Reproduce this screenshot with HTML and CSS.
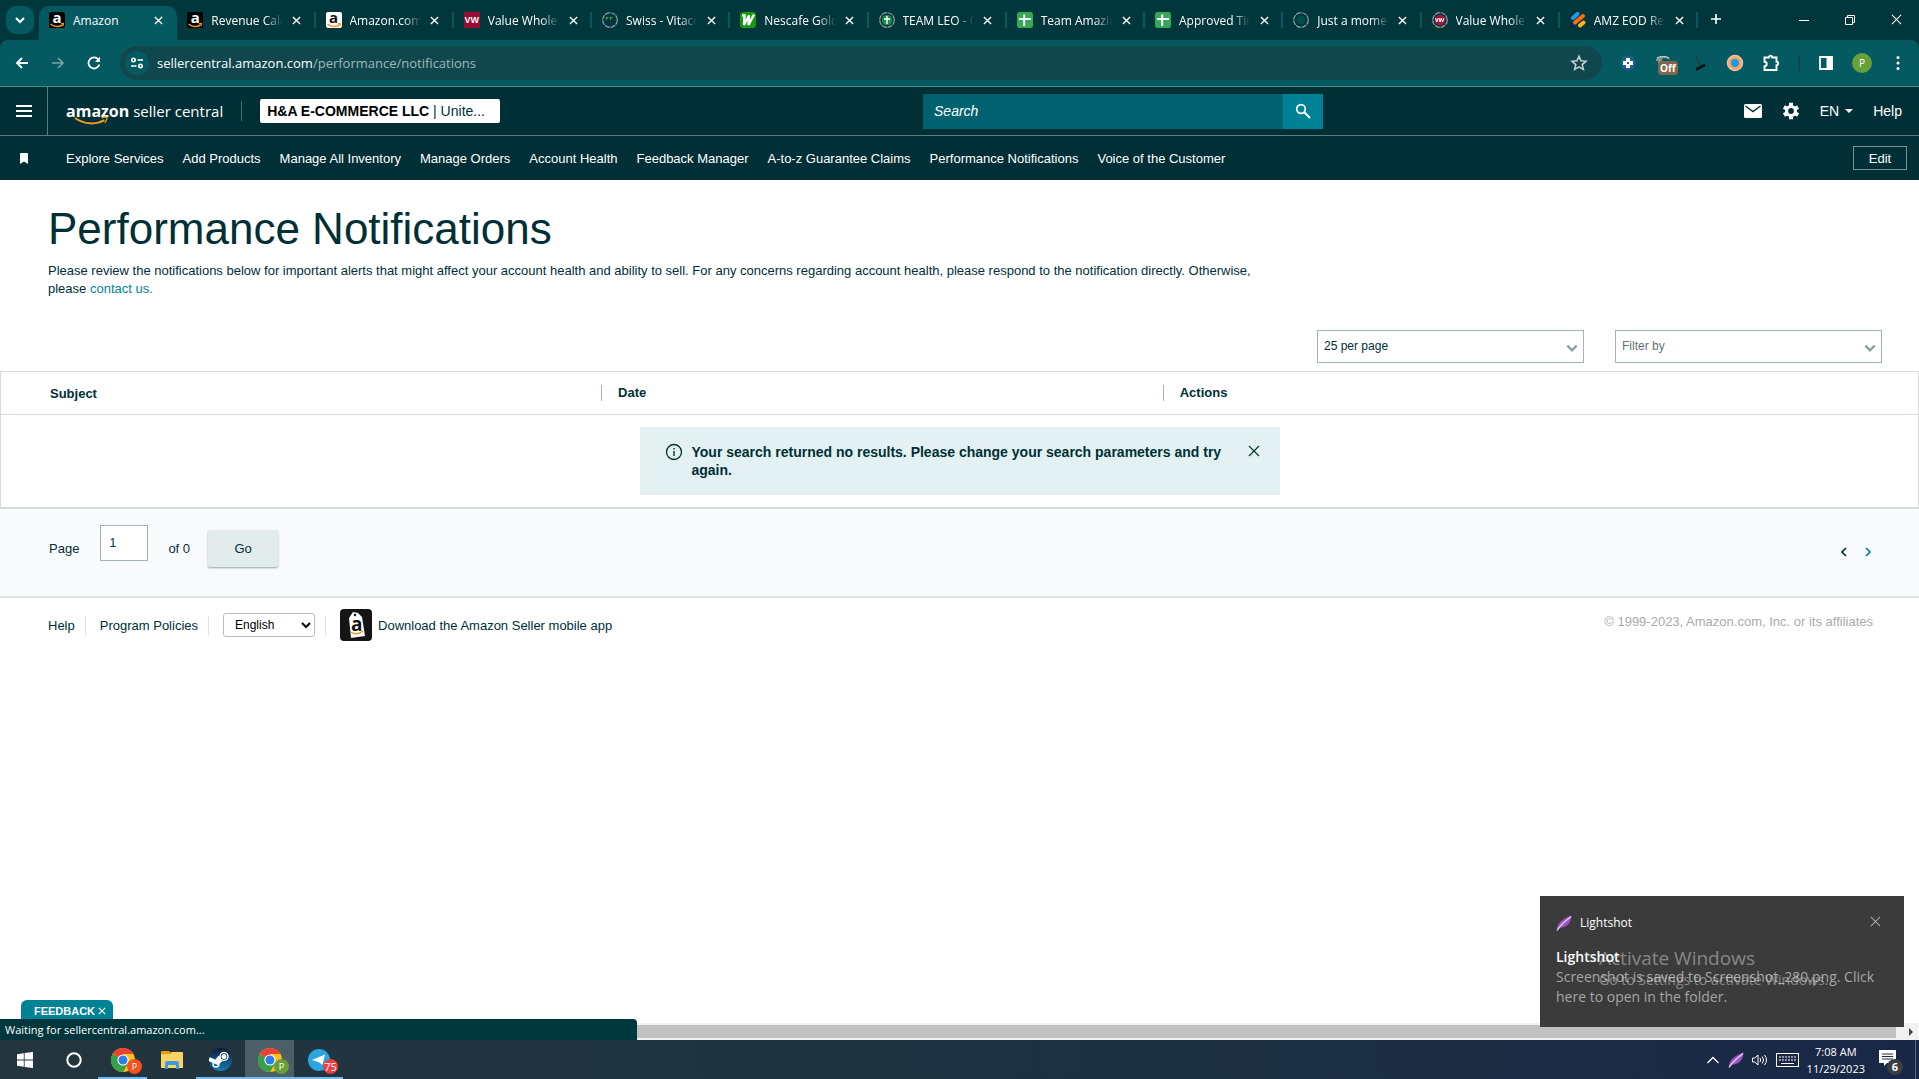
FILE: index.html
```html
<!DOCTYPE html>
<html lang="en">
<head>
    <meta charset="UTF-8">
    <meta name="viewport" content="width=device-width, initial-scale=1.0">
    <title>Performance Notifications</title>
    <link rel="stylesheet" href="styles.css">
</head>
<body>
    <!-- shared icons -->
    <svg class="defs" width="0" height="0" aria-hidden="true">
        <symbol id="i-x" viewBox="0 0 10 10"><path d="M1 1l8 8M9 1L1 9" fill="none" stroke="currentColor" stroke-width="1.5"/></symbol>
        <symbol id="i-thin-x" viewBox="0 0 12 12"><path d="M1 1l10 10M11 1L1 11" fill="none" stroke="currentColor" stroke-width="1.1"/></symbol>
        <symbol id="i-down" viewBox="0 0 12 12"><path d="M2 4l4 4 4-4" fill="none" stroke="currentColor" stroke-width="2"/></symbol>
        <symbol id="i-sheet" viewBox="0 0 16 16"><rect width="16" height="16" rx="1.500" fill="#34a853"/><path d="M6.200 2.500h2V6H14v2H8.200v6h-2V8H2V6h4.200z" fill="#fff"/></symbol>
        <symbol id="i-ring" viewBox="0 0 16 16"><circle cx="8" cy="8" r="7.300" fill="none" stroke="#8fa3a6" stroke-width="1.200" stroke-dasharray="5 .8"/></symbol>
        <symbol id="i-smile" viewBox="0 0 16 16"><path d="M1.500 12c4 3.300 9 3.200 12 .8" fill="none" stroke="#f7981d" stroke-width="1.500"/><path d="M11.800 11.800l2.700-.3-.6 2.700" fill="none" stroke="#f7981d" stroke-width="1.200"/></symbol>
        <symbol id="i-feather" viewBox="0 0 16 16"><path d="M1 15.500C0 9 7 3 15.500.5 15 8 11 12 5 12.500z" fill="#9b55bd"/><path d="M1 15.500C4 10 8 7 15 1.500" fill="none" stroke="#e6cdf2" stroke-width="1.300"/></symbol>
        <symbol id="i-chrome" viewBox="0 0 24 24"><circle cx="12" cy="12" r="12" fill="#fbc116"/><path d="M12 12L1.600 6A12 12 0 0 0 12 24l5.200-9z" fill="#34a047"/><path d="M12 12L1.600 6A12 12 0 0 1 22.400 6H12z" fill="#ea4335"/><circle cx="12" cy="12" r="5.600" fill="#fff"/><circle cx="12" cy="12" r="4.500" fill="#2f7de9"/></symbol>
    </svg>

    <header class="browser">
        <div class="tab-strip">
            <button class="tab-search" aria-label="Search tabs"><svg width="12" height="12"><use href="#i-down"/></svg></button>
            <div class="tabs">
                <div class="tab active">
                    <span class="favicon amazon-dark">a<svg width="16" height="16"><use href="#i-smile"/></svg></span>
                    <span class="tab-title">Amazon</span>
                    <button class="tab-close" aria-label="Close"><svg width="9" height="9"><use href="#i-x"/></svg></button>
                </div>
                <div class="tab">
                    <span class="favicon amazon-dark">a<svg width="16" height="16"><use href="#i-smile"/></svg></span>
                    <span class="tab-title">Revenue Calc</span>
                    <button class="tab-close" aria-label="Close"><svg width="9" height="9"><use href="#i-x"/></svg></button>
                </div>
                <div class="tab">
                    <span class="favicon amazon-light">a<svg width="16" height="16"><use href="#i-smile"/></svg></span>
                    <span class="tab-title">Amazon.com</span>
                    <button class="tab-close" aria-label="Close"><svg width="9" height="9"><use href="#i-x"/></svg></button>
                </div>
                <div class="tab">
                    <span class="favicon vw">VW</span>
                    <span class="tab-title">Value Wholes</span>
                    <button class="tab-close" aria-label="Close"><svg width="9" height="9"><use href="#i-x"/></svg></button>
                </div>
                <div class="tab">
                    <svg class="favicon" viewBox="0 0 16 16"><use href="#i-ring"/><path d="M4.500 8V5.500h2M8.500 8V5.500h1.500M10 5v1" fill="none" stroke="#5d9a3c" stroke-width="1.200"/></svg>
                    <span class="tab-title">Swiss - Vitaco</span>
                    <button class="tab-close" aria-label="Close"><svg width="9" height="9"><use href="#i-x"/></svg></button>
                </div>
                <div class="tab">
                    <svg class="favicon" viewBox="0 0 16 16"><rect width="16" height="16" rx="3" fill="#159a0c"/><path d="M2 3.500h2.500L4 13 9 3.500 8.500 13 14 2.500" fill="none" stroke="#fff" stroke-width="2.400"/></svg>
                    <span class="tab-title">Nescafe Gold</span>
                    <button class="tab-close" aria-label="Close"><svg width="9" height="9"><use href="#i-x"/></svg></button>
                </div>
                <div class="tab">
                    <svg class="favicon" viewBox="0 0 16 16"><use href="#i-ring"/><circle cx="8" cy="8" r="5.200" fill="#1e8a4c"/><path d="M8 4v8M5 7h6" stroke="#fff" stroke-width="1.400"/></svg>
                    <span class="tab-title">TEAM LEO - G</span>
                    <button class="tab-close" aria-label="Close"><svg width="9" height="9"><use href="#i-x"/></svg></button>
                </div>
                <div class="tab">
                    <svg class="favicon"><use href="#i-sheet"/></svg>
                    <span class="tab-title">Team Amazin</span>
                    <button class="tab-close" aria-label="Close"><svg width="9" height="9"><use href="#i-x"/></svg></button>
                </div>
                <div class="tab">
                    <svg class="favicon"><use href="#i-sheet"/></svg>
                    <span class="tab-title">Approved Tim</span>
                    <button class="tab-close" aria-label="Close"><svg width="9" height="9"><use href="#i-x"/></svg></button>
                </div>
                <div class="tab">
                    <svg class="favicon" viewBox="0 0 16 16"><use href="#i-ring"/><circle cx="8" cy="8" r="4.500" fill="#04494b"/></svg>
                    <span class="tab-title">Just a mome</span>
                    <button class="tab-close" aria-label="Close"><svg width="9" height="9"><use href="#i-x"/></svg></button>
                </div>
                <div class="tab">
                    <svg class="favicon" viewBox="0 0 16 16"><use href="#i-ring"/><circle cx="8" cy="8" r="5.500" fill="#a3123a"/><path d="M3.500 6l1.300 4L6.200 6M7 6l1 4 1.300-4 1.200 4L12 6" fill="none" stroke="#fff" stroke-width="1"/></svg>
                    <span class="tab-title">Value Whole</span>
                    <button class="tab-close" aria-label="Close"><svg width="9" height="9"><use href="#i-x"/></svg></button>
                </div>
                <div class="tab">
                    <svg class="favicon" viewBox="0 0 16 16" fill="none" stroke-width="4" stroke-linecap="round"><path d="M3 6l4.500-4" stroke="#1e9bf0"/><path d="M5 10.500L13 4" stroke="#ff6a13"/><path d="M10 13.500l3.500-3" stroke="#fdb515"/><path d="M1 12v4h4z" fill="#0c1f4a"/></svg>
                    <span class="tab-title">AMZ EOD Re</span>
                    <button class="tab-close" aria-label="Close"><svg width="9" height="9"><use href="#i-x"/></svg></button>
                </div>
            </div>
            <button class="new-tab" aria-label="New tab"><svg width="12" height="12" viewBox="0 0 12 12"><path d="M6 1v10M1 6h10" stroke="currentColor" stroke-width="1.600"/></svg></button>
            <div class="window-controls">
                <button aria-label="Minimize"><svg width="10" height="10" viewBox="0 0 10 10"><path d="M0 5.500h10" stroke="currentColor"/></svg></button>
                <button aria-label="Restore"><svg width="10" height="10" viewBox="0 0 10 10"><path d="M.5 2.500h7v7h-7zM2.500 2.500v-2h7v7h-2" fill="none" stroke="currentColor"/></svg></button>
                <button aria-label="Close window"><svg width="11" height="11"><use href="#i-thin-x"/></svg></button>
            </div>
        </div>

        <div class="toolbar">
            <button class="tool" aria-label="Back"><svg width="14" height="14" viewBox="0 0 14 14"><path d="M13 7H2M7 2L2 7l5 5" fill="none" stroke="currentColor" stroke-width="1.800"/></svg></button>
            <button class="tool dim" aria-label="Forward"><svg width="14" height="14" viewBox="0 0 14 14"><path d="M1 7h11M7 2l5 5-5 5" fill="none" stroke="currentColor" stroke-width="1.600"/></svg></button>
            <button class="tool" aria-label="Reload"><svg width="14" height="14" viewBox="0 0 14 14"><path d="M12.300 8.500A5.500 5.500 0 1 1 11.300 3.500L12.500 5" fill="none" stroke="currentColor" stroke-width="1.800"/><path d="M13 .8V6H8z" fill="currentColor"/></svg></button>
            <div class="address-bar">
                <span class="site-info"><svg width="14" height="14" viewBox="0 0 14 14" fill="none" stroke="currentColor" stroke-width="1.600"><circle cx="3.500" cy="4" r="1.700"/><path d="M7.500 4H13M1 10h5.500"/><circle cx="10.500" cy="10" r="1.700"/></svg></span>
                <span class="url">sellercentral.amazon.com<span>/performance/notifications</span></span>
                <button class="star" aria-label="Bookmark this tab"><svg width="18" height="18" viewBox="0 0 18 18"><path d="M9 2.200l2 4.600 5 .5-3.800 3.300 1.200 4.900L9 12.900l-4.400 2.600 1.200-4.900L2 7.300l5-.5z" fill="none" stroke="currentColor" stroke-width="1.500"/></svg></button>
            </div>
            <div class="extensions">
                <svg width="16" height="16" viewBox="0 0 16 16"><circle cx="8" cy="8" r="7.500" fill="#1d6090"/><path d="M6 3h4v3h3v4h-3v3H6v-3H3V6h3z" fill="#fff"/><path d="M7 7h2v2H7z" fill="#1d6090"/></svg>
                <span class="badge-ext"><svg width="20" height="18" viewBox="0 0 20 18"><path d="M2 5c3-3 12-3 14 0v1c-3-2-7-2-8-1v8H4V7L2 7z" fill="#8b9091"/><path d="M3 4c3-2 10-2 12 0" fill="none" stroke="#dfe3e3"/></svg><b>Off</b></span>
                <svg width="16" height="18" viewBox="0 0 16 18"><path d="M3 1l6 12" stroke="#23393b" stroke-width="1.300"/><path d="M4 15.500l9-4.500" stroke="#0b1112" stroke-width="2.600"/></svg>
                <svg width="18" height="18" viewBox="0 0 18 18"><circle cx="9" cy="9" r="7.500" fill="#f7a46a" stroke="#f4c29b" stroke-width="1.500"/><circle cx="9" cy="9" r="4" fill="#1d9be8"/></svg>
                <svg width="18" height="18" viewBox="0 0 18 18"><path d="M2.500 3.500h4.300a1.700 1.700 0 0 1 3.400 0h4.300v4.300a1.700 1.700 0 0 1 0 3.400v4.800h-12v-3.800a2.200 2.200 0 0 0 0-4.400z" fill="none" stroke="#fff" stroke-width="1.900"/></svg>
                <i class="tool-divider"></i>
                <svg width="16" height="16" viewBox="0 0 16 16"><path d="M2 2h12v12H2z" fill="none" stroke="#fff" stroke-width="1.800"/><path d="M8.500 2H14v12H8.500z" fill="#fff"/></svg>
                <span class="profile">P</span>
                <svg width="16" height="16" viewBox="0 0 16 16" fill="#fff"><circle cx="8" cy="2.500" r="1.500"/><circle cx="8" cy="8" r="1.500"/><circle cx="8" cy="13.500" r="1.500"/></svg>
            </div>
        </div>
    </header>

    <div class="page">
        <div class="seller-bar">
            <button class="menu-btn" aria-label="Menu"><svg width="16" height="12" viewBox="0 0 16 12"><path d="M0 1h16M0 6h16M0 11h16" stroke="currentColor" stroke-width="1.800"/></svg></button>
            <a class="logo" href="#"><b>amazon</b> seller central
                <svg class="logo-smile" width="36" height="9" viewBox="0 0 36 9"><path d="M1 2c9 6.500 21 7 29.500 2.200" fill="none" stroke="#f7981d" stroke-width="2"/><path d="M27.500 1.800c4-1.300 6-1 5.300 1-.3 1.600-1 2.800-2 4" fill="none" stroke="#f7981d" stroke-width="1.300"/></svg>
            </a>
            <button class="account"><b>H&amp;A E-COMMERCE LLC</b> | Unite...</button>
            <form class="search">
                <input type="text" placeholder="Search" aria-label="Search">
                <button type="button" aria-label="Search"><svg width="16" height="16" viewBox="0 0 16 16"><circle cx="6" cy="6" r="4.300" fill="none" stroke="currentColor" stroke-width="1.700"/><path d="M9.300 9.300L15 15" stroke="currentColor" stroke-width="2"/></svg></button>
            </form>
            <div class="header-tools">
                <a href="#" aria-label="Messages"><svg width="18" height="14" viewBox="0 0 18 14"><rect width="18" height="14" rx="1.500" fill="#fff"/><path d="M1.500 2L9 7.500 16.500 2" fill="none" stroke="#002f36" stroke-width="1.500"/></svg></a>
                <a href="#" aria-label="Settings"><svg width="18" height="18" viewBox="0 0 18 18"><path d="M9 .8v16.400M1.900 4.900l14.200 8.200M16.100 4.900L1.900 13.100" stroke="#fff" stroke-width="4"/><circle cx="9" cy="9" r="6" fill="#fff"/><circle cx="9" cy="9" r="2.900" fill="#002f36"/></svg></a>
                <a class="lang" href="#">EN <svg width="8" height="4" viewBox="0 0 8 4"><path d="M0 0h8L4 4z" fill="#fff"/></svg></a>
                <a href="#">Help</a>
            </div>
        </div>

        <nav class="favorites">
            <svg class="bookmark" width="8" height="11" viewBox="0 0 8 11"><path d="M0 1a1 1 0 0 1 1-1h6a1 1 0 0 1 1 1v10L4 8.500 0 11z" fill="#fff"/></svg>
            <a href="#">Explore Services</a>
            <a href="#">Add Products</a>
            <a href="#">Manage All Inventory</a>
            <a href="#">Manage Orders</a>
            <a href="#">Account Health</a>
            <a href="#">Feedback Manager</a>
            <a href="#">A-to-z Guarantee Claims</a>
            <a href="#">Performance Notifications</a>
            <a href="#">Voice of the Customer</a>
            <button class="edit">Edit</button>
        </nav>

        <main>
            <section class="intro">
                <h1>Performance Notifications</h1>
                <p>Please review the notifications below for important alerts that might affect your account health and ability to sell. For any concerns regarding account health, please respond to the notification directly. Otherwise, please <a href="#">contact us.</a></p>
            </section>

            <div class="filters">
                <div class="dropdown">
                    <select aria-label="Results per page"><option>25 per page</option></select>
                    <svg width="14" height="14" viewBox="0 0 12 12"><use href="#i-down"/></svg>
                </div>
                <div class="dropdown muted">
                    <select aria-label="Filter by"><option>Filter by</option></select>
                    <svg width="14" height="14" viewBox="0 0 12 12"><use href="#i-down"/></svg>
                </div>
            </div>

            <table class="notifications">
                <thead>
                    <tr>
                        <th class="subject">Subject</th>
                        <th class="date"><span>Date</span></th>
                        <th><span>Actions</span></th>
                    </tr>
                </thead>
                <tbody>
                    <tr>
                        <td colspan="3">
                            <div class="alert">
                                <svg width="18" height="18" viewBox="0 0 18 18"><circle cx="9" cy="9" r="7.500" fill="none" stroke="currentColor" stroke-width="1.300"/><path d="M9 8v5M9 5v1.500" stroke="currentColor" stroke-width="1.400"/></svg>
                                <p>Your search returned no results. Please change your search parameters and try again.</p>
                                <button aria-label="Dismiss"><svg width="12" height="12"><use href="#i-thin-x"/></svg></button>
                            </div>
                        </td>
                    </tr>
                </tbody>
            </table>

            <div class="pagination">
                <label for="page">Page</label>
                <input type="text" id="page" value="1">
                <span>of 0</span>
                <button class="go">Go</button>
                <div class="arrows">
                    <button aria-label="Previous"><svg width="6" height="10" viewBox="0 0 6 10"><path d="M5 1L1 5l4 4" fill="none" stroke="currentColor" stroke-width="1.700"/></svg></button>
                    <button class="next" aria-label="Next"><svg width="6" height="10" viewBox="0 0 6 10"><path d="M1 1l4 4-4 4" fill="none" stroke="currentColor" stroke-width="1.700"/></svg></button>
                </div>
            </div>

            <footer>
                <a href="#">Help</a>
                <i></i>
                <a href="#">Program Policies</a>
                <i></i>
                <select class="language" aria-label="Language"><option>English</option></select>
                <i></i>
                <a class="app" href="#">
                    <span class="app-icon"><svg width="32" height="32" viewBox="0 0 32 32"><path d="M9 9l4-6 5 1 4 4 3 19-14 2z" fill="#fff"/><circle cx="15" cy="6" r="1.200" fill="#111"/><path d="M11 23c4 3 8 2 12-1" fill="none" stroke="#f7981d" stroke-width="1.500"/></svg><b>a</b></span>
                    Download the Amazon Seller mobile app
                </a>
                <span class="copyright">© 1999-2023, Amazon.com, Inc. or its affiliates</span>
            </footer>
        </main>

        <div class="page-bottom">
            <button class="feedback">FEEDBACK <svg width="8" height="8"><use href="#i-x"/></svg></button>
            <div class="status-row">
                <div class="status">Waiting for sellercentral.amazon.com...</div>
                <div class="scrollbar"><i></i><svg width="16" height="16" viewBox="0 0 16 16"><path d="M6 4l4 4-4 4z" fill="#444"/></svg></div>
            </div>
        </div>

        <aside class="toast">
            <div class="toast-head">
                <svg width="16" height="16"><use href="#i-feather"/></svg>
                <span>Lightshot</span>
                <button aria-label="Close"><svg width="11" height="11"><use href="#i-thin-x"/></svg></button>
            </div>
            <strong>Lightshot</strong>
            <p>Screenshot is saved to Screenshot_280.png. Click here to open in the folder.</p>
            <div class="watermark">
                <div>Activate Windows</div>
                <small>Go to Settings to activate Windows.</small>
            </div>
        </aside>
    </div>

    <div class="taskbar">
        <button aria-label="Start"><svg width="16" height="16" viewBox="0 0 16 16" fill="#fff"><path d="M0 2.200l6.800-1v6.400H0zM7.600 1.100L16 0v7.600H7.600zM0 8.400h6.800v6.400l-6.800-1zM7.600 8.400H16V16l-8.400-1.100z"/></svg></button>
        <button aria-label="Cortana"><svg width="16" height="16" viewBox="0 0 16 16"><circle cx="8" cy="8" r="6.700" fill="none" stroke="#fff" stroke-width="2"/></svg></button>
        <button class="open" aria-label="Chrome"><svg width="24" height="24"><use href="#i-chrome"/></svg><b class="dot orange">P</b></button>
        <button aria-label="File Explorer"><svg width="22" height="18" viewBox="0 0 22 18"><path d="M0 1a1 1 0 0 1 1-1h7l2 2H0z" fill="#e5a100"/><path d="M0 3h9l2-2h10a1 1 0 0 1 1 1v15H0z" fill="#fcd462"/><path d="M0 3h9l2-2H0z" fill="#e5a100"/><path d="M4 18v-6a2 2 0 0 1 2-2h10a2 2 0 0 1 2 2v6h-3v-4H7v4z" fill="#3c9be6"/></svg></button>
        <button class="open" aria-label="Steam"><svg width="23" height="23" viewBox="0 0 23 23"><defs><linearGradient id="steam" x2="0" y2="1"><stop offset="0" stop-color="#111a3c"/><stop offset="1" stop-color="#127bb4"/></linearGradient></defs><circle cx="11.500" cy="11.500" r="11.500" fill="url(#steam)"/><path d="M0 11l7 3 4-5" fill="none" stroke="#fff" stroke-width="4"/><circle cx="15" cy="8.500" r="4" fill="#14284f" stroke="#fff" stroke-width="1.500"/><circle cx="15" cy="8.500" r="2.500" fill="#fff"/><path d="M7.500 16l5-4" stroke="#fff" stroke-width="3"/><circle cx="7" cy="16" r="3" fill="none" stroke="#fff" stroke-width="1.400"/></svg></button>
        <button class="open current" aria-label="Chrome"><svg width="24" height="24"><use href="#i-chrome"/></svg><b class="dot green">P</b></button>
        <button class="open" aria-label="Telegram"><svg width="22" height="22" viewBox="0 0 22 22"><circle cx="11" cy="11" r="11" fill="#2ca5e0"/><path d="M4 11l13-5.500L14.500 16l-4-3z" fill="#fff"/></svg><b class="dot red">75</b></button>
        <div class="tray">
            <svg width="14" height="14" viewBox="0 0 14 14"><path d="M1.500 10L7 4.500l5.500 5.500" fill="none" stroke="#fff" stroke-width="1.300"/></svg>
            <svg width="16" height="16"><use href="#i-feather"/></svg>
            <svg width="16" height="14" viewBox="0 0 16 14" fill="none" stroke="#fff"><path d="M.6 5v4h2.200L6 12V2L2.800 5z"/><path d="M8 5q1.500 2 0 4M10.200 3.500q3 3.500 0 7M12.500 2q4 5 0 10"/></svg>
            <svg width="23" height="14" viewBox="0 0 23 14" fill="none" stroke="#fff"><rect x=".5" y=".5" width="22" height="13"/><path d="M3 4h17M3 7h17" stroke-dasharray="2 1"/><path d="M5 10.500h13"/></svg>
            <div class="clock">7:08 AM<br>11/29/2023</div>
            <span class="action-center"><svg width="17" height="17" viewBox="0 0 17 17"><path d="M0 0h17v13H8l-3 3v-3H0z" fill="#fff"/><path d="M3 4h11M3 6.500h11M3 9h11" stroke="#1a2947"/></svg><b>6</b></span>
        </div>
    </div>
</body>
</html>
```
FILE: styles.css
```css
* {
    box-sizing: border-box;
}

body {
    margin: 0;
    height: 100vh;
    display: flex;
    flex-direction: column;
    overflow: hidden;
    font-family: "Liberation Sans", Arial, sans-serif;
    font-size: 13px;
    color: #002f36;
    background-color: #fff;
}

button {
    font: inherit;
    color: inherit;
    background: none;
    border: none;
    padding: 0;
    cursor: pointer;
}

a {
    color: inherit;
    text-decoration: none;
}

.defs {
    position: absolute;
}

/* browser window */
.browser,
.toast,
.taskbar,
.status {
    font-family: "Open Sans", sans-serif;
}

.browser {
    background-color: #00373c;
    color: #fff;
}

.tab-strip {
    display: flex;
    height: 40px;
    padding-left: 6px;
}

.tab-search {
    width: 28px;
    height: 28px;
    margin: 6px 5px 0 0;
    border-radius: 10px;
    background-color: #045a60;
    display: grid;
    place-items: center;
}

.tabs {
    flex: 1;
    display: flex;
    min-width: 0;
}

.tab {
    flex: 1 1 0;
    min-width: 0;
    display: flex;
    align-items: center;
    gap: 8px;
    padding: 0 11px 0 10px;
    position: relative;
}

.tab::after {
    content: "";
    position: absolute;
    right: 0;
    top: 12px;
    width: 2px;
    height: 16px;
    background-color: #045a60;
}

.tab.active {
    margin-top: 6px;
    padding-bottom: 6px;
    border-radius: 10px 10px 0 0;
    background-color: #045a60;
}

.tab.active::after {
    display: none;
}

.favicon {
    flex: none;
    width: 16px;
    height: 16px;
    border-radius: 2px;
    text-align: center;
    position: relative;
}

.favicon svg {
    position: absolute;
    left: 0;
    top: 0;
}

.amazon-dark,
.amazon-light {
    font: bold 15px/11px "Open Sans", sans-serif;
}

.amazon-dark {
    background-color: #000;
}

.amazon-light {
    background-color: #fff;
    color: #111;
}

.vw {
    background-color: #9b0c33;
    font: bold 9px/16px "Liberation Sans", Arial, sans-serif;
}

.tab-title {
    flex: 1;
    margin-right: -2px;
    overflow: hidden;
    white-space: nowrap;
    font-size: 12px;
    -webkit-mask-image: linear-gradient(to right, #000 75%, transparent);
    mask-image: linear-gradient(to right, #000 75%, transparent);
}

.tab.active .tab-title {
    -webkit-mask-image: none;
    mask-image: none;
}

.tab-close {
    width: 16px;
    height: 16px;
    display: grid;
    place-items: center;
}

.new-tab {
    width: 28px;
    margin: 0 51px 0 4px;
}

.window-controls {
    display: flex;
}

.window-controls button {
    width: 46px;
}

.toolbar {
    display: flex;
    align-items: center;
    gap: 8px;
    height: 47px;
    padding: 0 13px 0 8px;
    border-radius: 8px 8px 0 0;
    border-bottom: 1px solid #4d8a8e;
    background-color: #045a60;
}

.tool {
    width: 28px;
    height: 28px;
    display: grid;
    place-items: center;
}

.dim {
    opacity: 0.45;
}

.address-bar {
    flex: 1;
    display: flex;
    align-items: center;
    height: 34px;
    margin-left: 4px;
    padding: 0 14px 0 5px;
    border-radius: 17px;
    background-color: #10474d;
}

.site-info {
    width: 24px;
    height: 24px;
    margin-right: 8px;
    border-radius: 12px;
    background-color: #045a60;
    display: grid;
    place-items: center;
}

.url {
    flex: 1;
    font-size: 13px;
}

.url span {
    color: #9fb8ba;
}

.star {
    height: 18px;
    color: #c8d4d5;
}

.extensions {
    display: flex;
    align-items: center;
    gap: 18px;
    margin-left: 10px;
}

.badge-ext {
    position: relative;
    width: 20px;
    height: 18px;
}

.badge-ext b {
    position: absolute;
    left: 4px;
    top: 7px;
    padding: 0 2px;
    border-radius: 4px;
    background-color: #80664a;
    font-size: 10px;
    line-height: 14px;
}

.tool-divider {
    width: 2px;
    height: 16px;
    background-color: #10474d;
}

.profile {
    width: 20px;
    height: 20px;
    border-radius: 50%;
    background-color: #689f38;
    font-size: 10px;
    line-height: 20px;
    text-align: center;
}

/* seller central header */
.page {
    flex: 1;
    display: flex;
    flex-direction: column;
    position: relative;
}

.seller-bar {
    display: flex;
    align-items: center;
    height: 49px;
    background-color: #002f36;
    border-bottom: 1px solid #5f7b7f;
    color: #fff;
    position: relative;
}

.menu-btn {
    width: 48px;
    height: 48px;
    border-right: 1px solid #5f7b7f;
    display: grid;
    place-items: center;
}

.logo {
    margin-left: 18px;
    padding-right: 18px;
    border-right: 1px solid #4d6b70;
    font-family: "Open Sans", sans-serif;
    font-size: 15px;
    line-height: 20px;
    position: relative;
}

.logo b {
    font-size: 16px;
}

.logo-smile {
    position: absolute;
    left: 8px;
    bottom: -4px;
}

.account {
    width: 240px;
    height: 24px;
    margin-left: 18px;
    padding: 0 7px;
    border-radius: 2px;
    background-color: #fff;
    color: #002f36;
    font-size: 14px;
    text-align: left;
    white-space: nowrap;
}

.account b {
    color: #000;
}

.search {
    position: absolute;
    left: 48.1%;
    width: 400px;
    height: 35px;
    display: flex;
}

.search input {
    flex: 1;
    min-width: 0;
    padding: 0 11px;
    border: none;
    background-color: #00626f;
    font: italic 14px "Liberation Sans", Arial, sans-serif;
    color: #fff;
}

.search input::placeholder {
    color: #fff;
}

.search button {
    width: 40px;
    background-color: #008296;
    display: grid;
    place-items: center;
}

.header-tools {
    display: flex;
    align-items: center;
    gap: 20px;
    margin-left: auto;
    padding-right: 17px;
    font-size: 14px;
}

.header-tools svg {
    display: block;
}

.lang {
    display: flex;
    align-items: center;
    gap: 6px;
}

.favorites {
    display: flex;
    align-items: center;
    gap: 19px;
    height: 44px;
    padding: 0 12px 0 20px;
    background-color: #002f36;
    color: #fff;
    white-space: nowrap;
}

.bookmark {
    margin-right: 19px;
}

.edit {
    width: 54px;
    height: 24px;
    margin-left: auto;
    border: 1px solid #7b9194;
}

/* content */
.intro {
    padding: 23px 48px 0;
}

h1 {
    margin: 0;
    font-size: 44px;
    font-weight: normal;
    line-height: 52px;
}

.intro p {
    max-width: 1230px;
    margin: 7px 0 0;
    line-height: 18px;
}

.intro a {
    color: #008296;
}

.filters {
    display: flex;
    justify-content: flex-end;
    gap: 31px;
    margin: 32px 37px 8px 48px;
}

.dropdown {
    width: 267px;
    position: relative;
    color: #002f36;
}

.dropdown select {
    width: 100%;
    height: 33px;
    padding: 0 6px 2px;
    border: 1px solid #a2b3b5;
    border-radius: 0;
    background-color: #fff;
    appearance: none;
    color: inherit;
    font: 12px "Liberation Sans", Arial, sans-serif;
}

.dropdown svg {
    position: absolute;
    right: 5px;
    top: 11px;
    color: #8a9fa1;
}

.dropdown.muted {
    color: #5f7376;
}

.notifications {
    width: 100%;
    table-layout: fixed;
    border-collapse: separate;
    border-spacing: 0;
    border: 1px solid #d5dbdb;
    border-bottom-width: 2px;
}

.notifications th {
    height: 43px;
    padding: 0;
    border-bottom: 1px solid #d5dbdb;
    text-align: left;
}

.notifications .subject {
    width: 31.3%;
    padding-left: 49px;
}

.notifications .date {
    width: 29.3%;
}

.notifications th span {
    display: block;
    padding-left: 16px;
    border-left: 1px solid #a2b3b5;
    line-height: 16px;
}

.notifications td {
    padding: 12px 0;
}

.alert {
    display: flex;
    align-items: flex-start;
    width: 640px;
    margin: 0 auto;
    padding: 16px 20px 16px 25px;
    background-color: #e3f1f2;
    font-size: 14px;
    font-weight: bold;
    line-height: 18px;
}

.alert p {
    flex: 1;
    margin: 0 0 0 9px;
}

.alert button {
    height: 18px;
}

.pagination {
    display: flex;
    align-items: center;
    height: 89px;
    padding: 0 48px 8px 49px;
    border-bottom: 2px solid #dfe4e6;
    background-color: #f9fafc;
}

.pagination input {
    width: 48px;
    height: 36px;
    margin: 16px 20px 0 21px;
    padding: 0 8px;
    border: 1px solid #a2b3b5;
    font: 12px "Liberation Sans", Arial, sans-serif;
    color: #002f36;
    align-self: flex-start;
}

.go {
    width: 70px;
    height: 37px;
    margin-left: 18px;
    border-radius: 2px;
    background-color: #e3eced;
    box-shadow: 0 1px 2px #9aa5a7;
}

.arrows {
    display: flex;
    gap: 18px;
    margin-left: auto;
    padding-top: 8px;
}

.next {
    color: #008296;
}

footer {
    display: flex;
    align-items: center;
    gap: 14px;
    padding: 11px 46px 0 48px;
}

footer i {
    height: 19px;
    border-left: 1px solid #dde2e3;
    margin-left: -4px;
}

.language {
    width: 92px;
    height: 24px;
    padding-left: 7px;
    border: 1px solid #bbb;
    border-radius: 3px;
    background-color: #fff;
    font: 12px "Liberation Sans", Arial, sans-serif;
}

.app {
    display: flex;
    align-items: center;
    gap: 6px;
}

.app-icon {
    width: 32px;
    height: 32px;
    border-radius: 4px;
    background-color: #151515;
    position: relative;
}

.app-icon b {
    position: absolute;
    left: 11px;
    top: 5px;
    color: #111;
    font: bold 19px/20px "Open Sans", sans-serif;
}

.copyright {
    margin-left: auto;
    padding-bottom: 8px;
    color: #aaa;
}

/* bottom edge of the page */
.page-bottom {
    margin-top: auto;
}

.feedback {
    display: block;
    width: 92px;
    height: 19px;
    margin-left: 21px;
    padding: 4px 0 0 6px;
    border-radius: 6px 6px 0 0;
    background-color: #008296;
    color: #fff;
    font-size: 11px;
    font-weight: bold;
    line-height: 15px;
    white-space: nowrap;
}

.status-row {
    display: flex;
    align-items: flex-end;
}

.status {
    flex: none;
    width: 33.2%;
    height: 21px;
    padding-left: 5px;
    border-radius: 0 4px 0 0;
    background-color: #00373c;
    color: #fff;
    font-size: 11px;
    line-height: 21px;
}

.scrollbar {
    flex: 1;
    display: flex;
    align-items: center;
    gap: 7px;
    height: 17px;
    background-color: #f1f1f1;
}

.scrollbar i {
    flex: 1;
    height: 13px;
    background-color: #c1c1c1;
}

.toast {
    position: absolute;
    right: 15px;
    bottom: 13px;
    width: 364px;
    height: 131px;
    padding: 18px 16px;
    background-color: #3b3b3b;
    color: #a6a6a6;
    font-size: 14px;
    line-height: 20px;
}

.toast-head {
    display: flex;
    align-items: center;
    gap: 8px;
    height: 18px;
    margin-bottom: 15px;
    color: #fff;
    font-size: 12px;
}

.toast-head button {
    margin-left: auto;
    margin-right: 7px;
    color: #aaa;
}

.toast strong {
    display: block;
    color: #fff;
    font-weight: 600;
}

.toast p {
    margin: 0;
}

.watermark {
    position: absolute;
    left: 59px;
    top: 50px;
    color: rgba(255, 255, 255, 0.4);
    font-size: 19px;
    line-height: 24px;
    white-space: nowrap;
}

.watermark small {
    display: block;
    font-size: 14px;
    line-height: 20px;
}

/* windows taskbar */
.taskbar {
    display: flex;
    height: 39px;
    background: linear-gradient(to right, #23363f, #1d3040 60%, #192747);
    color: #fff;
}

.taskbar button {
    width: 49px;
    display: grid;
    place-items: center;
    position: relative;
}

.taskbar .open {
    box-shadow: inset 0 -2px #76b9ed;
}

.taskbar .current {
    background-color: #4c5e66;
}

.dot {
    position: absolute;
    right: 5px;
    bottom: 5px;
    width: 15px;
    height: 15px;
    border-radius: 50%;
    font-size: 9px;
    font-weight: normal;
    line-height: 15px;
}

.orange {
    background-color: #f4511e;
}

.green {
    background-color: #689f38;
}

.red {
    background-color: #f03e3e;
    font-size: 11px;
}

.tray {
    display: flex;
    align-items: center;
    gap: 8px;
    margin-left: auto;
    margin-right: 3px;
    padding-right: 12px;
    border-right: 1px solid #5b6880;
}

.clock {
    font-size: 11px;
    line-height: 17px;
    text-align: center;
}

.action-center {
    position: relative;
    width: 24px;
    height: 20px;
    margin-left: 6px;
}

.action-center b {
    position: absolute;
    right: 0;
    bottom: -5px;
    width: 16px;
    height: 16px;
    border-radius: 50%;
    background-color: #3a3d42;
    font-size: 11px;
    line-height: 16px;
    text-align: center;
}
```
